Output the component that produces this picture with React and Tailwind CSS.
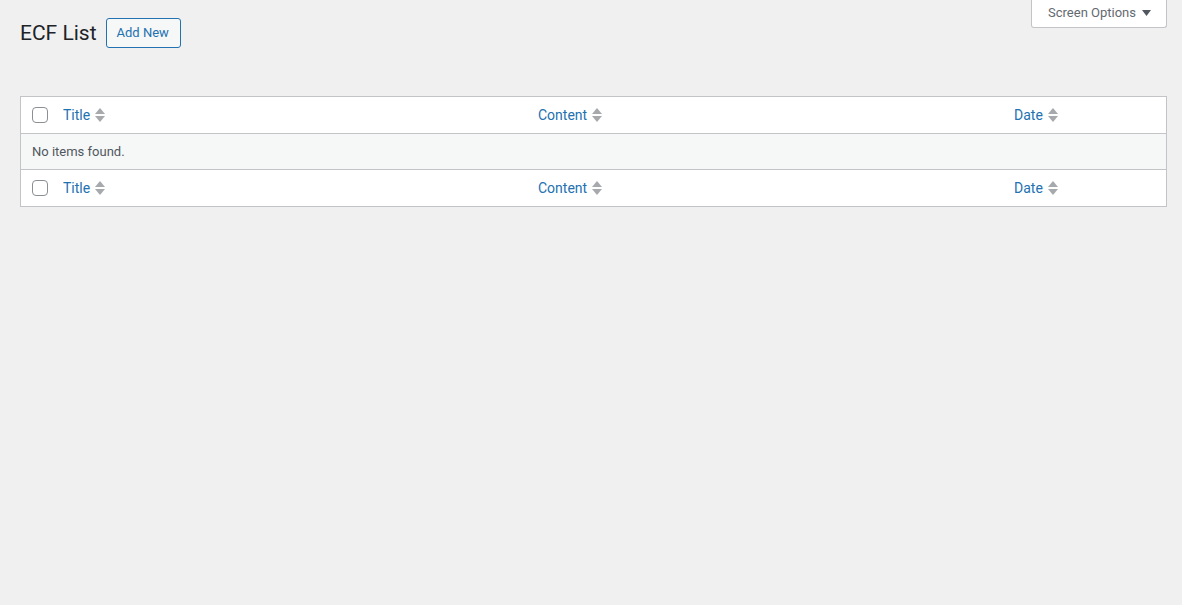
const FONT = "font-['Segoe_UI','Roboto','Noto_Sans',sans-serif]"

// Up/down sort indicator shown next to sortable column labels
function SortArrows() {
  return (
    <svg width="10" height="18" viewBox="0 0 10 18" className="ml-[5px] shrink-0" aria-hidden="true">
      <path d="M0 8 L5 2 L10 8 Z" fill="#a7aaad" />
      <path d="M0 10 L5 16 L10 10 Z" fill="#a7aaad" />
    </svg>
  )
}

function Checkbox() {
  return (
    <span className="block w-4 h-4 rounded-[4px] border border-[#8c8f94] bg-white" />
  )
}

function ColumnRow({ className = '' }) {
  const cols = ['Title', 'Content', 'Date']
  return (
    <div className={`grid grid-cols-[32px_475px_476px_1fr] h-[37px] items-center bg-white ${className}`}>
      <div className="pl-[11px]">
        <Checkbox />
      </div>
      {cols.map((c) => (
        <div key={c} className="pl-[10px] flex items-center">
          <a href="#" className="text-[14px] text-[#2271b1] leading-none">
            {c}
          </a>
          <SortArrows />
        </div>
      ))}
    </div>
  )
}

export default function App() {
  return (
    <div className={`min-h-screen bg-[#f0f0f1] text-[#3c434a] ${FONT}`}>
      <div className="flex justify-end pr-[15px]">
        <button className="h-[28px] pl-[16px] pr-[15px] pb-[2px] bg-white border border-t-0 border-[#c3c4c7] rounded-b-[3px] text-[13px] text-[#646970] flex items-center gap-[6px]">
          Screen Options
          <svg width="9" height="6" viewBox="0 0 9 6" aria-hidden="true">
            <path d="M0 0 L9 0 L4.5 6 Z" fill="#50575e" />
          </svg>
        </button>
      </div>

      <div className="pl-[20px] pr-[15px]">
        <div className="flex items-center -mt-[10px]">
          <h1 className="text-[21px] font-normal text-[#1d2327] leading-[29px]">ECF List</h1>
          <a
            href="#"
            className="ml-[9px] h-[30px] pl-[10px] pr-[11px] flex items-center border border-[#2271b1] rounded-[3px] bg-[#f6f7f7] text-[13px] text-[#2271b1]"
          >
            Add New
          </a>
        </div>

        <div className="mt-[48px] border border-[#c3c4c7] bg-white">
          <ColumnRow className="border-b border-[#c3c4c7]" />
          <div className="h-[35px] bg-[#f6f7f7] flex items-center pl-[11px] text-[13px] text-[#50575e]">
            No items found.
          </div>
          <ColumnRow className="border-t border-[#c3c4c7]" />
        </div>
      </div>
    </div>
  )
}
